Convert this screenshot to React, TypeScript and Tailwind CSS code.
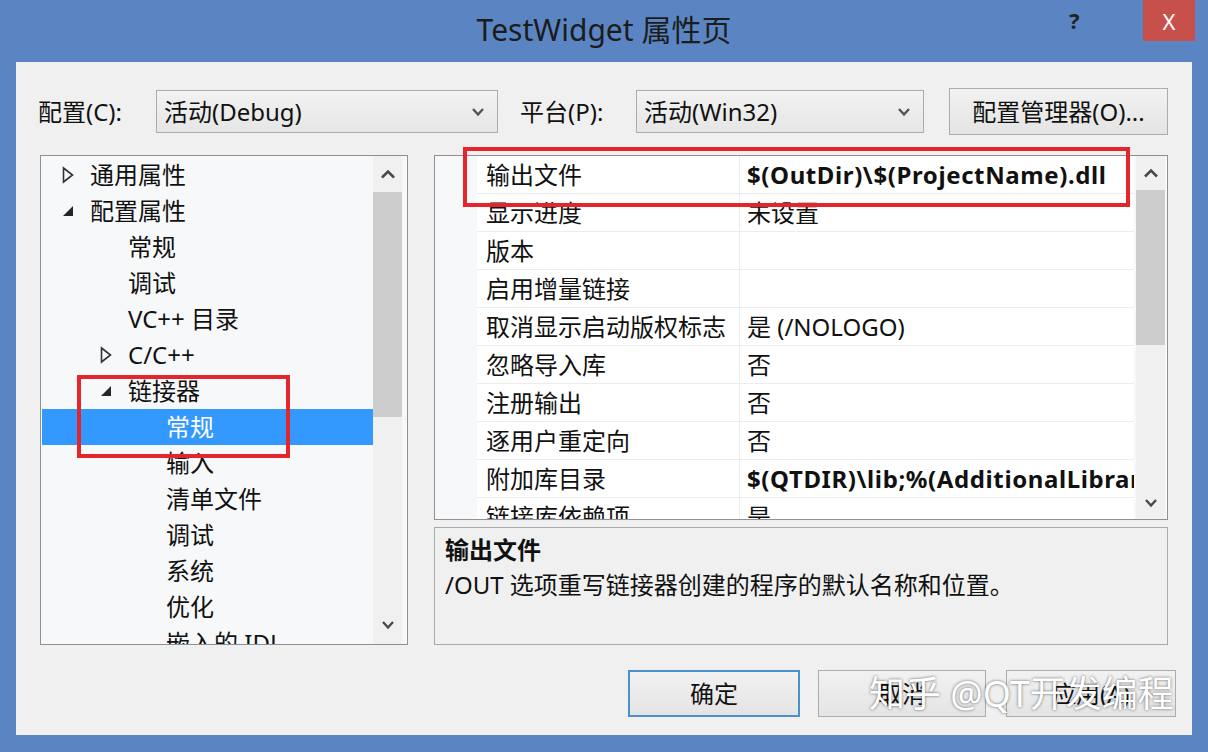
import React from "react";

const FONT = '"Noto Sans", "Noto Sans CJK SC", sans-serif';

function ChevronUp() {
  return (
    <svg width="16" height="10" viewBox="0 0 16 10">
      <path d="M2 8.5 L8 2.5 L14 8.5" fill="none" stroke="#4a4a4a" strokeWidth="2.6" />
    </svg>
  );
}
function ChevronDown({ color = "#4a4a4a" }: { color?: string }) {
  return (
    <svg width="14" height="10" viewBox="0 0 14 10">
      <path d="M2 2 L7 7.5 L12 2" fill="none" stroke={color} strokeWidth="2.4" />
    </svg>
  );
}
function TriClosed() {
  return (
    <svg width="12" height="18" viewBox="0 0 12 18">
      <path d="M1.5 2 L10.5 9 L1.5 16 Z" fill="none" stroke="#333" strokeWidth="1.6" />
    </svg>
  );
}
function TriOpen() {
  return (
    <svg width="12" height="12" viewBox="0 0 12 12">
      <path d="M11 1 L11 11 L1 11 Z" fill="#262626" />
    </svg>
  );
}

type TreeItem = { label: string; level: number; tri?: "open" | "closed"; selected?: boolean };
const tree: TreeItem[] = [
  { label: "通用属性", level: 0, tri: "closed" },
  { label: "配置属性", level: 0, tri: "open" },
  { label: "常规", level: 1 },
  { label: "调试", level: 1 },
  { label: "VC++ 目录", level: 1 },
  { label: "C/C++", level: 1, tri: "closed" },
  { label: "链接器", level: 1, tri: "open" },
  { label: "常规", level: 2, selected: true },
  { label: "输入", level: 2 },
  { label: "清单文件", level: 2 },
  { label: "调试", level: 2 },
  { label: "系统", level: 2 },
  { label: "优化", level: 2 },
  { label: "嵌入的 IDL", level: 2 },
];

type Row = { name: string; value: string; bold?: boolean };
const rows: Row[] = [
  { name: "输出文件", value: "$(OutDir)\\$(ProjectName).dll", bold: true },
  { name: "显示进度", value: "未设置" },
  { name: "版本", value: "" },
  { name: "启用增量链接", value: "" },
  { name: "取消显示启动版权标志", value: "是 (/NOLOGO)" },
  { name: "忽略导入库", value: "否" },
  { name: "注册输出", value: "否" },
  { name: "逐用户重定向", value: "否" },
  { name: "附加库目录", value: "$(QTDIR)\\lib;%(AdditionalLibraryDirectories)", bold: true },
  { name: "链接库依赖项", value: "是" },
];

export default function App() {
  return (
    <div
      className="relative w-[1208px] h-[752px] bg-[#5b85c2] flex flex-col overflow-hidden text-[#111] text-[24px]"
      style={{ fontFamily: FONT }}
    >
      {/* Title bar */}
      <div className="relative h-[62px] flex items-center justify-center shrink-0">
        <div className="text-[30px] text-[#1c1c1c] leading-none mt-[-2px]">TestWidget 属性页</div>
        <div className="absolute left-[1069px] top-[9px] text-[22px] font-bold text-[#222] leading-none">?</div>
        <div className="absolute right-[13px] top-0 w-[52px] h-[41px] bg-[#c8504b] flex items-center justify-center text-white text-[22px] leading-none">
          X
        </div>
      </div>

      {/* Client area */}
      <div className="mx-[16px] mb-[17px] flex-1 bg-[#f0f0f0] flex flex-col">
        {/* Top row */}
        <div className="mt-[26px] h-[47px] flex items-center pl-[22px] pr-[24px]">
          <div className="w-[118px] whitespace-nowrap">配置(C):</div>
          <div className="w-[342px] h-[43px] border border-[#acacac] bg-gradient-to-b from-[#f2f2f2] to-[#e6e6e6] flex items-center pl-[7px] pr-[12px]">
            <span className="flex-1">活动(Debug)</span>
            <ChevronDown color="#555" />
          </div>
          <div className="w-[116px] pl-[22px] box-content whitespace-nowrap">平台(P):</div>
          <div className="w-[288px] h-[43px] border border-[#acacac] bg-gradient-to-b from-[#f2f2f2] to-[#e6e6e6] flex items-center pl-[7px] pr-[12px]">
            <span className="flex-1">活动(Win32)</span>
            <ChevronDown color="#555" />
          </div>
          <div className="ml-[25px] w-[219px] h-[47px] border border-[#acacac] bg-gradient-to-b from-[#f2f2f2] to-[#e4e4e4] flex items-center justify-center whitespace-nowrap">
            配置管理器(O)...
          </div>
        </div>

        {/* Main area */}
        <div className="mt-[20px] h-[490px] flex gap-[26px] px-[24px]">
          {/* Tree */}
          <div className="w-[369px] h-full border border-[#8e9196] bg-[#f7f8f9] flex">
            <div className="flex-1 overflow-hidden pt-[1px]">
              {tree.map((t, i) => (
                <div
                  key={i}
                  className={`h-[36px] flex items-center ml-[1px] ${t.selected ? "bg-[#3399ff] text-white" : ""}`}
                  style={{ paddingLeft: 20 + t.level * 38 }}
                >
                  <div className="w-[28px] flex items-center">
                    {t.tri === "closed" && <TriClosed />}
                    {t.tri === "open" && <TriOpen />}
                  </div>
                  <span className="whitespace-nowrap">{t.label}</span>
                </div>
              ))}
            </div>
            <div className="w-[29px] mr-[5px] flex flex-col bg-[#f0f0f0]">
              <div className="h-[36px] flex items-center justify-center">
                <ChevronUp />
              </div>
              <div className="h-[225px] bg-[#cdcdcd]" />
              <div className="flex-1" />
              <div className="h-[38px] flex items-center justify-center">
                <ChevronDown />
              </div>
            </div>
          </div>

          {/* Right side */}
          <div className="w-[734px] h-full flex flex-col">
            <div className="h-[365px] border border-[#8e9196] bg-[#f7f8f9] flex">
              <div className="w-[42px]" />
              <div className="flex-1 overflow-hidden bg-white">
                {rows.map((r, i) => (
                  <div key={i} className="h-[38px] flex border-b border-[#ececec]">
                    <div className="w-[263px] pl-[9px] flex items-center border-r border-[#ececec] whitespace-nowrap">
                      {r.name}
                    </div>
                    <div
                      className={`flex-1 pl-[7px] flex items-center whitespace-nowrap overflow-hidden ${r.bold ? "font-bold tracking-[0.6px]" : ""}`}
                    >
                      {r.value}
                    </div>
                  </div>
                ))}
              </div>
              <div className="w-[29px] mx-[2px] flex flex-col bg-[#f0f0f0]">
                <div className="h-[34px] flex items-center justify-center">
                  <ChevronUp />
                </div>
                <div className="h-[155px] bg-[#cdcdcd]" />
                <div className="flex-1" />
                <div className="h-[32px] flex items-center justify-center">
                  <ChevronDown />
                </div>
              </div>
            </div>
            <div className="mt-[7px] flex-1 border border-[#a9a9a9] bg-[#f0f0f0] px-[10px] pt-[6px] leading-[32px]">
              <div className="font-bold">输出文件</div>
              <div className="mt-[3px]">/OUT 选项重写链接器创建的程序的默认名称和位置。</div>
            </div>
          </div>
        </div>

        {/* Buttons */}
        <div className="mt-[25px] h-[47px] flex justify-end pr-[16px]">
          <div className="w-[172px] h-full border-2 border-[#4a90d0] bg-gradient-to-b from-[#f2f2f2] to-[#e4e4e4] flex items-center justify-center">
            确定
          </div>
          <div className="ml-[18px] w-[168px] h-full border border-[#acacac] bg-gradient-to-b from-[#f2f2f2] to-[#e4e4e4] flex items-center justify-center">
            取消
          </div>
          <div className="ml-[20px] w-[170px] h-full border border-[#acacac] bg-gradient-to-b from-[#f2f2f2] to-[#e4e4e4] flex items-center justify-center">
            应用(A)
          </div>
        </div>
      </div>

      {/* Red highlight boxes */}
      <div className="absolute left-[77px] top-[375px] w-[213px] h-[83px] border-[4px] border-[#e3262b]" />
      <div className="absolute left-[463px] top-[147px] w-[667px] h-[60px] border-[4px] border-[#e3262b]" />

      {/* Watermark */}
      <div className="absolute left-[869px] top-[672px] text-[36px] leading-[44px] text-white whitespace-nowrap [text-shadow:0_0_3px_rgba(0,0,0,0.6)]">
        知乎 @QT开发编程
      </div>
    </div>
  );
}
